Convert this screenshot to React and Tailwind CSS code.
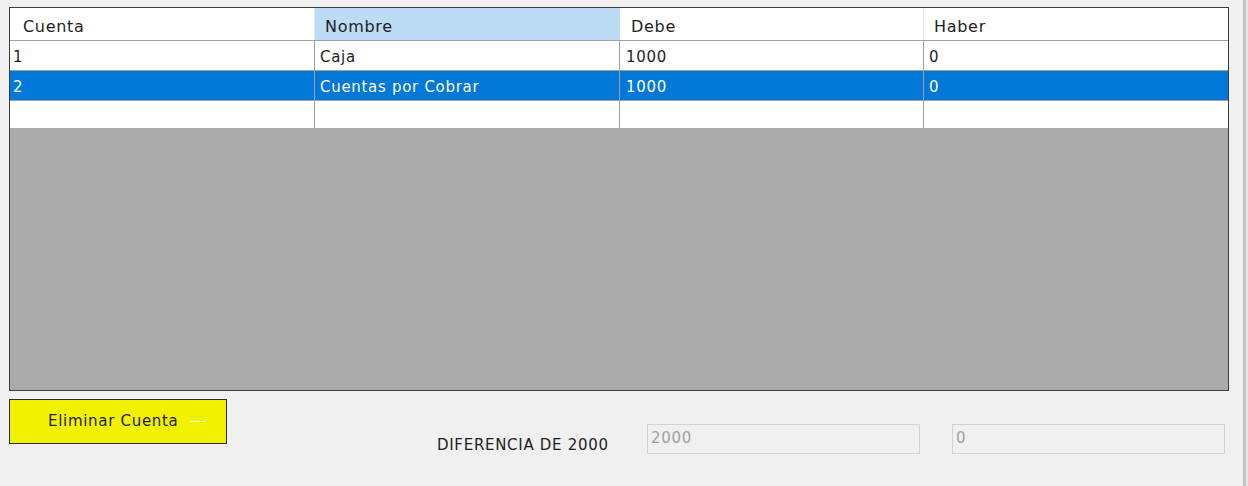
export default function App() {
  const font = { fontFamily: '"DejaVu Sans", "Liberation Sans", sans-serif' };
  const rows = [
    { c: "1", n: "Caja", d: "1000", h: "0", sel: false },
    { c: "2", n: "Cuentas por Cobrar", d: "1000", h: "0", sel: true },
  ];
  return (
    <div className="w-[1248px] h-[486px] bg-[#f0f0f0] overflow-hidden flex text-[15px] tracking-[0.7px]" style={font}>
      <div className="w-[1243px] pl-[9px] pt-[7px] flex flex-col">
        <div className="w-[1220px] h-[384px] border border-[#3c3c3c] bg-[#ababab] flex flex-col">
          <div className="grid grid-cols-[305px_305px_304px_304px] h-[33px] bg-white border-b border-[#a0a0a0] text-[#1e1e1e] text-[16px]">
            <div className="border-r border-[#e5e5e5] pl-[13px] pt-[5px] flex items-center">Cuenta</div>
            <div className="bg-[#bcdcf4] pl-[10px] pt-[5px] flex items-center">Nombre</div>
            <div className="border-r border-[#e5e5e5] pl-[11px] pt-[5px] flex items-center">Debe</div>
            <div className="pl-[10px] pt-[5px] flex items-center">Haber</div>
          </div>
          {rows.map((r) => (
            <div
              key={r.c}
              className={
                "grid grid-cols-[305px_305px_304px_304px] h-[30px] border-b border-[#a0a0a0] " +
                (r.sel ? "bg-[#0078d7] text-white" : "bg-white text-[#1e1e1e]")
              }
            >
              <div className="border-r border-[#a0a0a0] pl-[3px] pt-[4px] flex items-center">{r.c}</div>
              <div className="border-r border-[#a0a0a0] pl-[5px] pt-[4px] flex items-center">{r.n}</div>
              <div className="border-r border-[#a0a0a0] pl-[6px] pt-[4px] flex items-center">{r.d}</div>
              <div className="pl-[5px] pt-[4px] flex items-center">{r.h}</div>
            </div>
          ))}
          <div className="grid grid-cols-[305px_305px_304px_304px] h-[27px] bg-white">
            <div className="border-r border-[#a0a0a0]"></div>
            <div className="border-r border-[#a0a0a0]"></div>
            <div className="border-r border-[#a0a0a0]"></div>
            <div></div>
          </div>
        </div>
        <div className="flex items-start">
          <button className="mt-[8px] w-[218px] h-[45px] bg-[#f2f200] border border-[#2a2a2a] flex items-center pl-[38px] text-[#222] tracking-[0.7px]">
            <span>Eliminar Cuenta</span>
            <span className="ml-[11px] w-[15px] h-[1px] bg-white"></span>
          </button>
          <div className="mt-[44px] ml-[210px] w-[210px] h-[20px] leading-[20px] text-[#1e1e1e] whitespace-nowrap">DIFERENCIA DE 2000</div>
          <div className="mt-[33px] w-[273px] h-[30px] border border-[#d2d2d2] bg-[#f0f0f0] pl-[3px] pt-[3px] text-[#a0a0a0] leading-[20px]">2000</div>
          <div className="mt-[33px] ml-[32px] w-[273px] h-[30px] border border-[#d2d2d2] bg-[#f0f0f0] pl-[3px] pt-[3px] text-[#a0a0a0] leading-[20px]">0</div>
        </div>
      </div>
      <div className="w-[3px] h-full bg-[#c4c4c4]"></div>
      <div className="flex-1 h-full bg-[#e8e8e8]"></div>
    </div>
  );
}
